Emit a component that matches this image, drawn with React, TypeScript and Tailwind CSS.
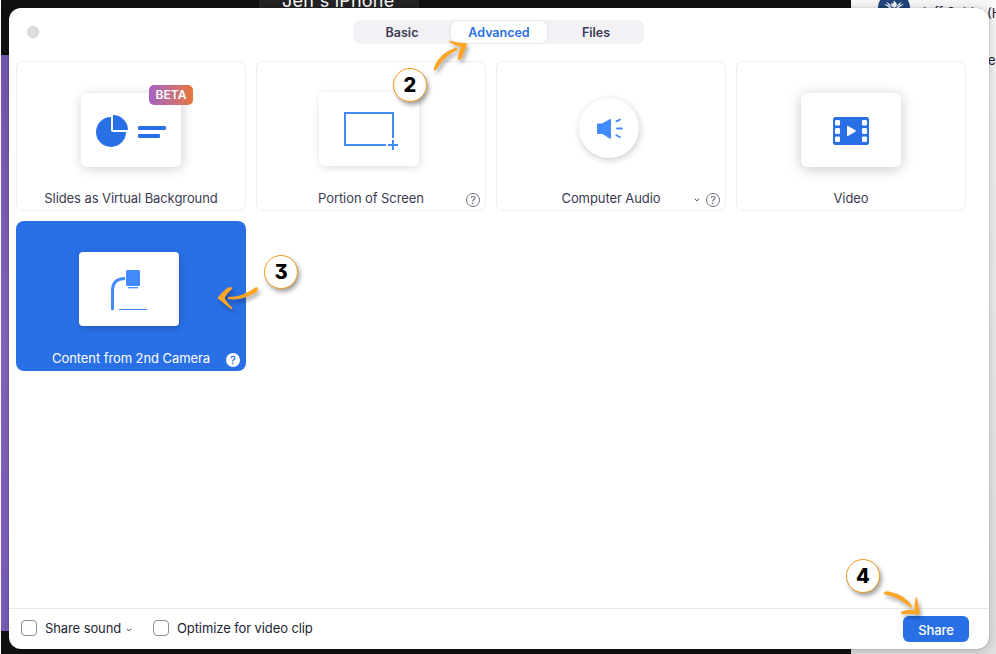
import React from 'react';

type CardProps = {
  label: string;
  selected?: boolean;
  help?: boolean;
  chevron?: boolean;
  children: React.ReactNode;
};

function Chevron() {
  return (
    <svg width="6" height="4" viewBox="0 0 6 4" fill="none" stroke="#3b3b52" strokeWidth="0.9">
      <path d="M0.8 0.8 L3 2.8 L5.2 0.8" />
    </svg>
  );
}

function Help({ selected }: { selected?: boolean }) {
  return (
    <span
      className={
        selected
          ? 'flex size-[14px] items-center justify-center rounded-full bg-white text-[11px] leading-none font-medium text-[#2970e6]'
          : 'flex size-[14px] items-center justify-center rounded-full border border-[#74748c] text-[11px] leading-none text-[#5c5c74]'
      }
    >
      ?
    </span>
  );
}

function Card({ label, selected, help, chevron, children }: CardProps) {
  return (
    <div
      className={
        selected
          ? 'relative flex h-[150px] w-[230px] flex-col items-center rounded-lg bg-[#2970e6] text-white'
          : 'relative flex h-[150px] w-[230px] flex-col items-center rounded-lg text-[#3b3b52] shadow-[inset_0_0_0_1px_#ededf4]'
      }
    >
      <div className="flex h-[128px] flex-col items-center">{children}</div>
      <div className="text-[13px] leading-[19px] tracking-[-0.08px] whitespace-nowrap">{label}</div>
      {help && (
        <div className="absolute right-[6px] bottom-[4px] flex items-center gap-[6px]">
          {chevron && <Chevron />}
          <Help selected={selected} />
        </div>
      )}
    </div>
  );
}

function Step({ n, className }: { n: string; className: string }) {
  return (
    <div
      className={
        "absolute flex size-[34px] items-center justify-center rounded-full border-[1.5px] border-[#f49b1b] bg-white font-[Inter,sans-serif] text-[20px] leading-none font-extrabold text-black [font-feature-settings:'cv09'] shadow-[2px_3px_4px_rgba(0,0,0,0.36)] " +
        className
      }
    >
      {n}
    </div>
  );
}

function Emblem() {
  return (
    <svg className="absolute top-[-8px] left-[878px]" width="32" height="32" viewBox="0 0 32 32">
      <circle cx="16" cy="16" r="16" fill="#23457b" />
      <g fill="#f4f7fb">
        <path d="M16 8.500C18 10.500 19.500 12 18.500 14Q17 17 14.500 15Q12.500 13 13.500 10.500L15 12Z" />
        <path d="M6 12Q12 12.500 15 18L13 18Q11 15 6 12ZM26 12Q20 12.500 17 18L19 18Q21 15 26 12Z" />
        <path d="M8 9.500Q12 11.500 14 15Q10 13.500 8 9.500ZM24 9.500Q20 11.500 18 15Q22 13.500 24 9.500Z" />
      </g>
    </svg>
  );
}

const arrowShadow = '[filter:drop-shadow(2px_3px_2px_rgba(0,0,0,0.35))]';

export default function App() {
  return (
    <div className="relative h-[654px] w-[996px] overflow-hidden bg-[#e6e6e6] font-[Inter,'Liberation_Sans',sans-serif] antialiased">
      {/* desktop behind the dialog */}
      <div className="absolute inset-0 flex">
        <div className="w-px bg-white" />
        <div className="flex w-[850px] flex-col bg-[#111111]">
          <div className="h-[55px]">
            <div className="ml-[258px] h-[10px] w-[160px] bg-[#252525]" />
          </div>
          <div className="h-[576px] bg-linear-to-b from-[#7659b6] via-[#8866c2] to-[#7c5fc0]" />
        </div>
        <div className="flex-1 bg-linear-to-b from-[#fafafa] via-[#eeeeee] to-[#e2e2e2]" />
      </div>
      <div className="absolute top-[-9px] left-[282px] text-[18px] leading-[20px] tracking-[0.22px] whitespace-nowrap text-white">Jen's iPhone</div>
      <Emblem />
      <div className="absolute top-[3px] left-[919px] text-[13px] leading-[18px] whitespace-nowrap text-[#27273a]">Jeff Soble</div>
      <div className="absolute top-[4px] left-[987px] text-[13px] leading-[18px] whitespace-nowrap text-[#27273a]">(H</div>
      <div className="absolute top-[51px] left-[988px] text-[13px] leading-[18px] text-[#27273a]">e</div>

      {/* share dialog */}
      <div className="absolute top-[8px] left-[9px] flex h-[641px] w-[980px] flex-col rounded-[12px] bg-white shadow-[0_0_1px_rgba(0,0,0,0.55),0_2px_14px_rgba(0,0,0,0.22)]">
        <header className="flex h-[53px] items-start pt-[12px]">
          <div className="mt-[6px] ml-[18px] size-[12px] rounded-full border border-[#d2d2d2] bg-[#dcdcdc]" />
          <nav className="ml-[314px] flex h-[24px] w-[291px] items-center rounded-[8px] bg-[#f2f1f6] text-[12.5px] font-semibold text-[#3b3b52]">
            <div className="w-[98px] pt-[2px] text-center">Basic</div>
            <div className="flex h-[22px] w-[96px] items-center justify-center rounded-[7px] bg-white pt-[2px] text-[#2970e6] shadow-[0_0_3px_rgba(0,0,0,0.1)]">Advanced</div>
            <div className="w-[97px] pt-[2px] pl-px text-center">Files</div>
          </nav>
        </header>
        <main className="grid flex-1 grid-cols-[repeat(4,230px)] content-start gap-[10px] pl-[7px]">
          <Card label="Slides as Virtual Background">
            <div className="relative mt-[32px] flex h-[74px] w-[100px] items-center justify-center rounded-[6px] bg-white shadow-[1px_2px_12px_rgba(0,0,0,0.18)]">
              <svg className="mt-[2px]" width="72" height="34" viewBox="0 0 72 34" fill="#2970e6">
                <path d="M16 3 A15 15 0 1 0 31 18 H18 Q16 18 16 16 Z" />
                <path d="M18 1 A15 15 0 0 1 33 16 H18 Z" />
                <rect x="43" y="12" width="28" height="4" rx="1.2" />
                <rect x="43" y="20" width="22" height="4" rx="1.2" />
              </svg>
              <span className="absolute top-[-8px] left-[68px] flex h-[20px] w-[44px] items-center justify-center rounded-[5px] bg-linear-to-r from-[#a75fc0] to-[#e67532] text-[12px] leading-none font-semibold text-white">BETA</span>
            </div>
          </Card>
          <Card label="Portion of Screen" help>
            <div className="mt-[31px] mr-[4px] flex h-[74px] w-[100px] rounded-[5px] bg-white pt-[19px] pl-[25px] shadow-[1px_2px_9px_rgba(0,0,0,0.13)]">
              <svg width="56" height="42" viewBox="0 0 56 42" fill="none" stroke="#428bff" strokeWidth="2">
                <path d="M42 34H1V2H49V27" />
                <path d="M44 34H54M49 29V39" />
              </svg>
            </div>
          </Card>
          <Card label="Computer Audio" help chevron>
            <div className="mt-[37px] mr-[4px] flex size-[60px] items-center justify-center rounded-full bg-white shadow-[1px_2px_7px_rgba(0,0,0,0.2)]">
              <svg className="mt-[2px]" width="30" height="22" viewBox="0 0 30 22" fill="#428bff" stroke="#428bff" strokeLinecap="round">
                <path d="M4 5.500H8L15.500 1.200Q17 0.700 17 2V19.500Q17 21 15.600 20.600L8.500 16H4Q3 16 3 15V6.500Q3 5.500 4 5.500Z" stroke="none" />
                <path d="M22.300 3.300L26 1.700M23 10.500H28M22.300 17.300L26 19.200" strokeWidth="1.8" />
              </svg>
            </div>
          </Card>
          <Card label="Video">
            <div className="mt-[32px] flex h-[74px] w-[100px] items-center justify-center rounded-[6px] bg-white shadow-[0_2px_14px_rgba(0,0,0,0.22)]">
              <svg className="mt-[2px]" width="36" height="28" viewBox="0 0 36 28">
                <rect width="36" height="28" rx="2.5" fill="#2970e6" />
                <g fill="#fff">
                  <rect x="2" y="3" width="5" height="5.5" rx="1.2" />
                  <rect x="2" y="11" width="5" height="6" rx="1.2" />
                  <rect x="2" y="19.5" width="5" height="5.5" rx="1.2" />
                  <rect x="29" y="3" width="5" height="5.5" rx="1.2" />
                  <rect x="29" y="11" width="5" height="6" rx="1.2" />
                  <rect x="29" y="19.5" width="5" height="5.5" rx="1.2" />
                  <path d="M14 9.5Q14 8.5 15 9L22.5 13.3Q23.3 14 22.5 14.6L15 19Q14 19.4 14 18.4Z" />
                </g>
              </svg>
            </div>
          </Card>
          <Card label="Content from 2nd Camera" selected help>
            <div className="mt-[31px] mr-[4px] flex h-[74px] w-[100px] rounded-[4px] bg-white pt-[18px] pl-[31px] shadow-[1px_2px_7px_rgba(0,0,0,0.2)]">
              <svg width="38" height="42" viewBox="0 0 38 42" fill="none" stroke="#428bff">
                <path d="M2.5 38.5V21Q2.5 8.5 15 8.5" strokeWidth="3" />
                <path d="M2.5 37V38.7" strokeWidth="3" strokeLinecap="round" />
                <rect x="16" y="0" width="14" height="16" rx="1.5" fill="#428bff" stroke="none" />
                <path d="M18 17.7H28" strokeWidth="1.3" />
                <path d="M9 39.5H37" strokeWidth="1.1" />
              </svg>
            </div>
          </Card>
        </main>
        <footer className="flex h-[41px] items-center rounded-b-[12px] border-t border-[#e8e8f2] pl-[12px] text-[13px] tracking-[-0.1px] text-[#232333]">
          <span className="mb-[3px] size-[16px] rounded-[4px] border border-[#8f8f96]" />
          <span className="ml-[8px] w-[76px] whitespace-nowrap">Share sound</span>
          <span className="mt-px ml-[5px] flex"><Chevron /></span>
          <span className="mb-[3px] ml-[21px] size-[16px] rounded-[4px] border border-[#8f8f96]" />
          <span className="ml-[8px]">Optimize for video clip</span>
          <button className="mr-[20px] ml-auto flex h-[26px] w-[66px] items-center justify-center rounded-[6px] bg-[#2970e6] pt-[3px] text-[13px] font-medium text-white">Share</button>
        </footer>
      </div>

      {/* numbered walkthrough callouts */}
      <Step n="2" className="top-[68px] left-[393px]" />
      <Step n="3" className="top-[255px] left-[264px]" />
      <Step n="4" className="top-[559px] left-[846px]" />
      <svg className={'absolute top-[38px] left-[430px] ' + arrowShadow} width="42" height="36" viewBox="0 0 42 36" fill="#fca426">
        <path d="M4.500 33Q3.500 31 4.500 28Q10 15 26 9.500L28 11.500Q14 18 7.500 30Z" />
        <path d="M19 2.500Q27 5 36 5L37 7Q34 13 31.500 21L27.500 22Q28 15 31 9Q25 8 19.500 4Z" />
      </svg>
      <svg className={'absolute top-[284px] left-[215px] ' + arrowShadow} width="46" height="28" viewBox="0 0 46 28" fill="#fca426">
        <path d="M13 13Q28 13 41 3L43 4Q43 8 38 10Q26 17 13 15Z" />
        <path d="M16.500 3L17 5Q12 9 9.500 14Q12 19 17.500 24L16.500 25.500Q8 19 2.500 14Q8 7 13 3.500Z" />
      </svg>
      <svg className={'absolute top-[588px] left-[880px] ' + arrowShadow} width="44" height="32" viewBox="0 0 44 32" fill="#fca426">
        <path d="M3.500 5Q5 2.500 9 3.500Q25 7 32 18L31 20Q19 9 5 6.500Z" />
        <path d="M36 9L37 9.500Q38 17 40 25L38 26.500Q31 25 22 26.500L20.500 24Q28 21 34.500 22Q34 16 36 9Z" />
      </svg>
    </div>
  );
}
